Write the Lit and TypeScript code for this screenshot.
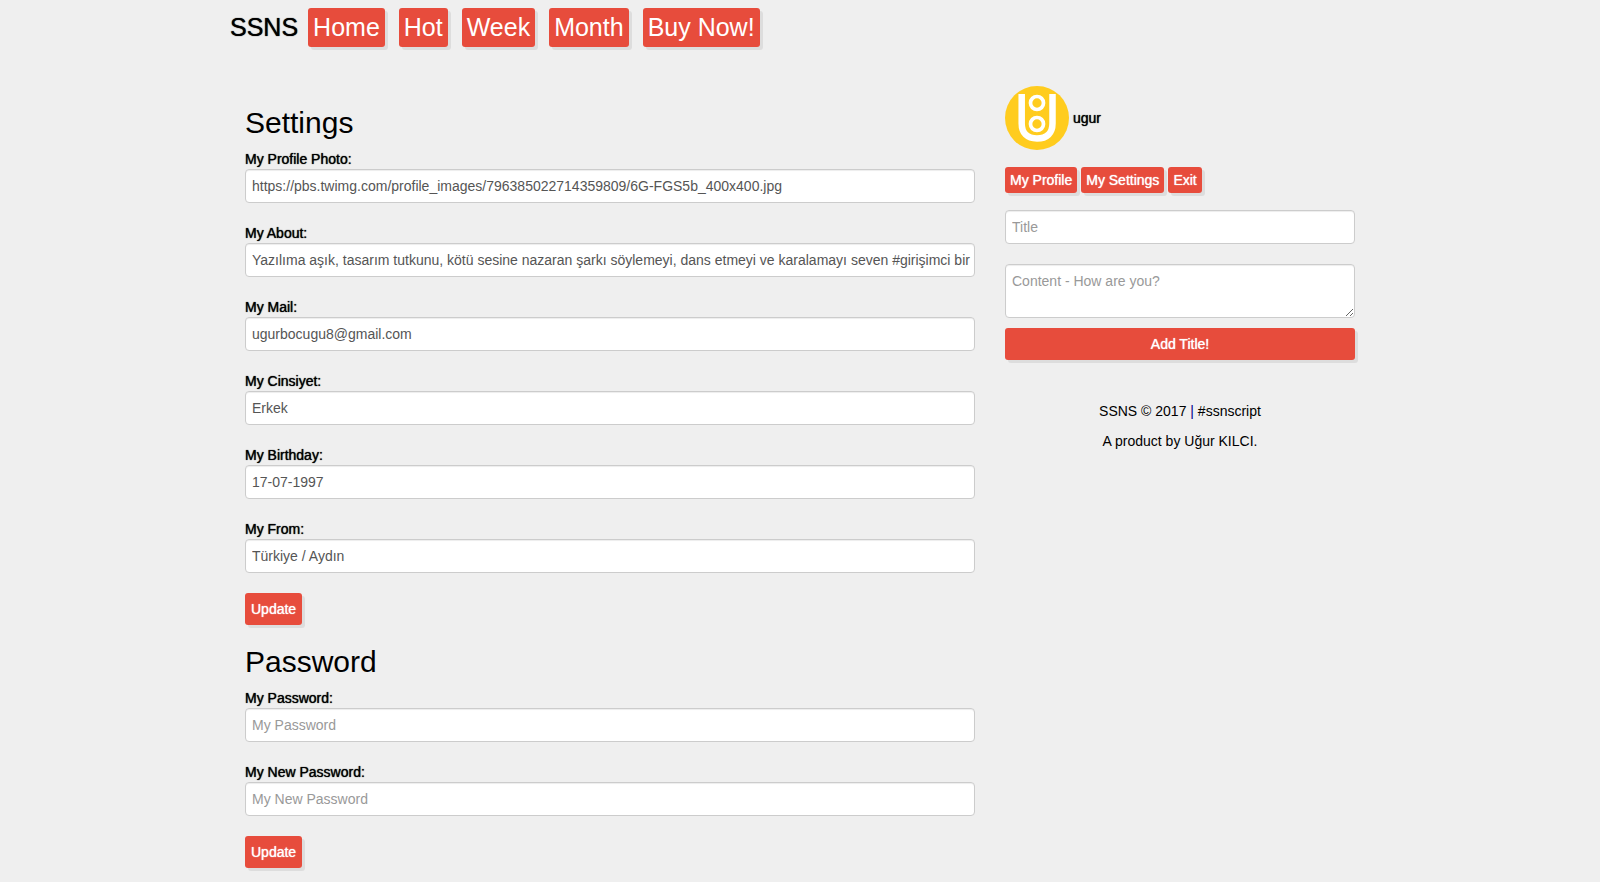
import { LitElement, html, css } from "lit";
import { customElement } from "lit/decorators.js";

interface Field {
  id: string;
  label: string;
  value?: string;
  type?: string;
  placeholder?: string;
}

const NAV = ["Home", "Hot", "Week", "Month", "Buy Now!"];

const PROFILE: Field[] = [
  { id: "photo", label: "My Profile Photo:", value: "https://pbs.twimg.com/profile_images/796385022714359809/6G-FGS5b_400x400.jpg" },
  { id: "about", label: "My About:", value: "Yazılıma aşık, tasarım tutkunu, kötü sesine nazaran şarkı söylemeyi, dans etmeyi ve karalamayı seven #girişimci bir" },
  { id: "mail", label: "My Mail:", value: "ugurbocugu8@gmail.com" },
  { id: "gender", label: "My Cinsiyet:", value: "Erkek" },
  { id: "birthday", label: "My Birthday:", value: "17-07-1997" },
  { id: "from", label: "My From:", value: "Türkiye / Aydın" },
];

const PASSWORD: Field[] = [
  { id: "password", label: "My Password:", type: "password", placeholder: "My Password" },
  { id: "new-password", label: "My New Password:", type: "password", placeholder: "My New Password" },
];

@customElement("app-root")
export class AppRoot extends LitElement {
  static styles = css`
    :host {
      display: block;
      min-height: 100vh;
      background: #efefef;
      color: #000;
      font: 14px/20px "Liberation Sans", Arial, sans-serif;
    }
    *, *::before, *::after { box-sizing: border-box; }
    .container {
      max-width: 1170px;
      margin: 0 auto;
      padding: 8px 15px 14px;
    }
    .nav {
      display: flex;
      flex-wrap: wrap;
      align-items: center;
      gap: 14px;
      font-size: 25px;
      line-height: 29px;
    }
    .brand {
      color: #000;
      text-decoration: none;
      margin-right: -4px;
      text-shadow: 0 0 1px currentColor;
    }
    .btn {
      display: inline-block;
      border: 0;
      border-radius: 3px;
      padding: 5px;
      background: #e74c3c;
      color: #fff;
      font: inherit;
      text-align: center;
      text-decoration: none;
      box-shadow: 3px 3px 0 #ddd;
      cursor: pointer;
    }
    .small {
      line-height: 16px;
      text-shadow: 0 0 1px currentColor;
    }
    .submit {
      padding: 6px;
      text-shadow: 0 0 1px currentColor;
    }
    .wide { width: 100%; }
    .columns {
      display: grid;
      grid-template-columns: minmax(0, 2fr) minmax(0, 1fr);
      margin-top: 39px;
    }
    .column { padding: 0 15px; }
    h2 {
      margin: 20px 0 10px;
      font-size: 30px;
      line-height: 33px;
      font-weight: 400;
    }
    .field { margin-bottom: 20px; }
    .label {
      display: block;
      text-shadow: 0 0 1px currentColor;
    }
    .control {
      display: block;
      width: 100%;
      height: 34px;
      margin: 0;
      padding: 6px 3px 6px 6px;
      border: 1px solid #ccc;
      border-radius: 4px;
      background: #fff;
      color: #555;
      font: inherit;
      box-shadow: inset 0 1px 1px rgba(0, 0, 0, 0.075);
    }
    .control::placeholder { color: #999; opacity: 1; }
    .area { height: 54px; resize: vertical; margin-bottom: 10px; }
    .user {
      display: flex;
      align-items: center;
      gap: 4px;
      color: #000;
      text-decoration: none;
      text-shadow: 0 0 1px currentColor;
    }
    .avatar { display: block; width: 64px; height: 64px; }
    .links {
      display: flex;
      flex-wrap: wrap;
      gap: 4px;
      margin: 17px 0;
    }
    footer { margin-top: 41px; text-align: center; }
    footer p { margin: 0 0 10px; }
    .bar { color: #00008b; }
    @media (max-width: 767px) {
      .columns { grid-template-columns: minmax(0, 1fr); }
    }
  `;

  private stop(e: Event) {
    e.preventDefault();
  }

  private field(f: Field) {
    return html`<div class="field">
      <label class="label" for=${f.id}>${f.label}</label>
      <input class="control" id=${f.id} type=${f.type ?? "text"} .value=${f.value ?? ""} placeholder=${f.placeholder ?? ""} />
    </div>`;
  }

  render() {
    return html`<div class="container">
      <nav class="nav">
        <a class="brand" href="#">SSNS</a>
        ${NAV.map((n) => html`<a class="btn" href="#">${n}</a>`)}
      </nav>
      <div class="columns">
        <main class="column">
          <form @submit=${this.stop}>
            <h2>Settings</h2>
            ${PROFILE.map((f) => this.field(f))}
            <button class="btn submit">Update</button>
          </form>
          <form @submit=${this.stop}>
            <h2>Password</h2>
            ${PASSWORD.map((f) => this.field(f))}
            <button class="btn submit">Update</button>
          </form>
        </main>
        <aside class="column">
          <a class="user" href="#">
            <svg class="avatar" viewBox="0 0 64 64" aria-hidden="true">
              <circle cx="32" cy="32" r="32" fill="#ffcc1e" />
              <g fill="none" stroke="#fff">
                <path d="M16.7 8v29.5C16.7 47 22 52.5 32 52.5S47.500 47 47.500 37.500V8" stroke-width="6.500" />
                <circle cx="32" cy="17" r="6.500" stroke-width="3.700" />
                <circle cx="32" cy="38" r="6.500" stroke-width="3.700" />
              </g>
            </svg>
            ugur
          </a>
          <div class="links">
            <a class="btn small" href="#">My Profile</a>
            <a class="btn small" href="#">My Settings</a>
            <a class="btn small" href="#">Exit</a>
          </div>
          <form @submit=${this.stop}>
            <div class="field"><input class="control" type="text" aria-label="Title" placeholder="Title" /></div>
            <textarea class="control area" aria-label="Content" placeholder="Content - How are you?"></textarea>
            <button class="btn submit wide">Add Title!</button>
          </form>
          <footer>
            <p>SSNS © 2017 <span class="bar">|</span> #ssnscript</p>
            <p>A product by Uğur KILCI.</p>
          </footer>
        </aside>
      </div>
    </div>`;
  }
}
